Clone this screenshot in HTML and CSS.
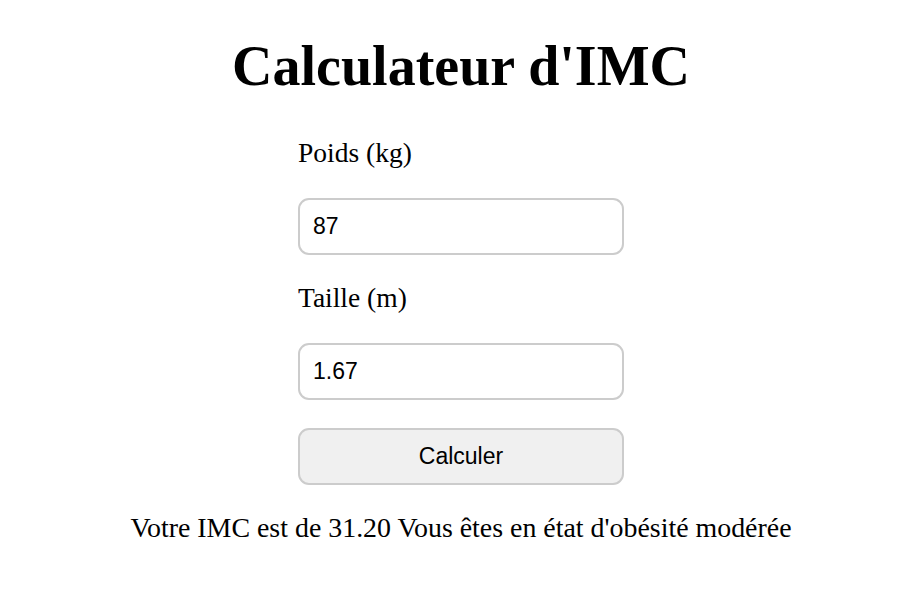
FILE: index.html
```html
<!DOCTYPE html>
<html lang="fr">
<head>
<meta charset="utf-8">
<title>Calculateur d'IMC</title>
<link rel="stylesheet" href="styles.css">
</head>
<body>
<main class="page">
  <h1 class="title">Calculateur d'IMC</h1>
  <form class="form">
    <label class="label label-first" for="poids">Poids (kg)</label>
    <input class="field" id="poids" type="text" value="87">
    <label class="label" for="taille">Taille (m)</label>
    <input class="field" id="taille" type="text" value="1.67">
    <button class="btn" type="button">Calculer</button>
  </form>
  <p class="result">Votre IMC est de 31.20 Vous êtes en état d'obésité modérée</p>
</main>
</body>
</html>
```
FILE: styles.css
```css
html, body {
  margin: 0;
  padding: 0;
  background: #ffffff;
}
body {
  font-family: "Liberation Serif", "Times New Roman", serif;
  font-size: 27.5px;
  color: #000;
}
.page {
  display: flex;
  flex-direction: column;
  align-items: center;
  padding-left: 20px;
}
.title {
  font-size: 56px;
  font-weight: bold;
  line-height: 63px;
  margin: 35px 0 0;
}
.form {
  width: 326px;
  display: flex;
  flex-direction: column;
}
.label {
  display: block;
  line-height: 32px;
  margin-top: 27px;
}
.label-first {
  margin-top: 39px;
}
.field {
  box-sizing: border-box;
  width: 100%;
  height: 57px;
  margin-top: 29px;
  padding: 0 13px;
  border: 2px solid #cccccc;
  border-radius: 11px;
  font-family: "Liberation Sans", Arial, sans-serif;
  font-size: 23px;
  color: #000;
  background: #fff;
  outline: none;
}
.btn {
  box-sizing: border-box;
  width: 100%;
  height: 57px;
  margin-top: 28px;
  border: 2px solid #cccccc;
  border-radius: 11px;
  background: #f0f0f0;
  font-family: "Liberation Sans", Arial, sans-serif;
  font-size: 23px;
  color: #000;
  padding: 0;
}
.result {
  margin: 27px 0 0;
  line-height: 32px;
  font-size: 27.9px;
}
```
